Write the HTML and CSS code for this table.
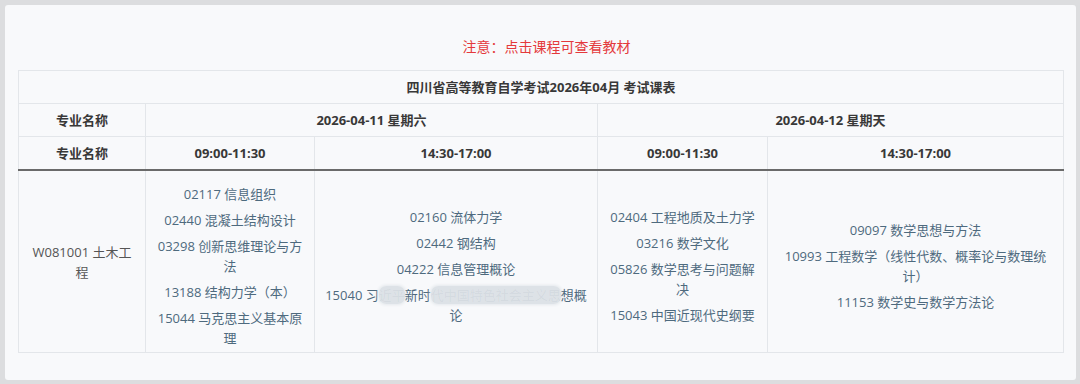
FILE: index.html
```html
<!DOCTYPE html>
<html lang="zh-CN">
<head>
<meta charset="utf-8">
<title>考试课表</title>
<link rel="stylesheet" href="styles.css">
</head>
<body>
<div class="card">
  <p class="notice">注意：点击课程可查看教材</p>
  <table class="schedule">
    <colgroup>
      <col class="c1"><col class="c2"><col class="c3"><col class="c4"><col class="c5">
    </colgroup>
    <thead>
      <tr><th colspan="5">四川省高等教育自学考试2026年04月 考试课表</th></tr>
      <tr><th>专业名称</th><th colspan="2">2026-04-11 星期六</th><th colspan="2">2026-04-12 星期天</th></tr>
      <tr class="last"><th>专业名称</th><th>09:00-11:30</th><th>14:30-17:00</th><th>09:00-11:30</th><th>14:30-17:00</th></tr>
    </thead>
    <tbody>
      <tr>
        <td class="major">W081001 土木工程</td>
        <td><div class="list">
          <a>02117 信息组织</a>
          <a>02440 混凝土结构设计</a>
          <a>03298 创新思维理论与方法</a>
          <a>13188 结构力学（本）</a>
          <a>15044 马克思主义基本原理</a>
        </div></td>
        <td><div class="list">
          <a>02160 流体力学</a>
          <a>02442 钢结构</a>
          <a>04222 信息管理概论</a>
          <a>15040 习<span class="blur">近平</span>新时<span class="blur">代中国特色社会主义思</span>想概论</a>
        </div></td>
        <td><div class="list">
          <a>02404 工程地质及土力学</a>
          <a>03216 数学文化</a>
          <a>05826 数学思考与问题解决</a>
          <a>15043 中国近现代史纲要</a>
        </div></td>
        <td><div class="list">
          <a>09097 数学思想与方法</a>
          <a>10993 工程数学（线性代数、概率论与数理统计）</a>
          <a>11153 数学史与数学方法论</a>
        </div></td>
      </tr>
    </tbody>
  </table>
</div>
</body>
</html>
```

FILE: styles.css
```css
html, body {
  margin: 0;
  padding: 0;
  background: #dcdddf;
}
body {
  padding: 5px;
  font-family: "Open Sans", "Noto Sans CJK SC", sans-serif;
  font-size: 13px;
}
.card {
  width: 1071px;
  height: 375px;
  box-sizing: border-box;
  background: #f8f9fb;
  border-radius: 3px;
  padding: 32px 13px 0 13px;
}
.notice {
  margin: 0 0 13px 0;
  padding-left: 12px;
  text-align: center;
  color: #e4393c;
  font-size: 14px;
  line-height: 20px;
}
.schedule {
  width: 1045px;
  table-layout: fixed;
  border-collapse: collapse;
  border: 1px solid #e3e6ea;
}
.c1 { width: 127px; }
.c2 { width: 169px; }
.c3 { width: 283px; }
.c4 { width: 170px; }
.c5 { width: 296px; }
.schedule th {
  border: 1px solid #e3e6ea;
  padding: 7px 8px;
  line-height: 18px;
  font-weight: bold;
  color: #383838;
  text-align: center;
}
.schedule tr.last th {
  border-bottom: 2px solid #6a6a6a;
}
.schedule td {
  border: 1px solid #e3e6ea;
  border-top: 0;
  padding: 13px 8px 4px 8px;
  text-align: center;
  vertical-align: middle;
  line-height: 20px;
}
.schedule td.major {
  color: #555;
  padding: 8px 12px 8px 12px;
}
.list {
  display: flex;
  flex-direction: column;
  gap: 6px;
}
.list a {
  color: #4e6a7e;
  text-decoration: none;
}
.blur {
  color: rgba(78, 106, 126, 0.08);
  background: #dde2e7;
  border-radius: 7px;
  box-shadow: 0 0 3px 1px #e4e8ec;
}
```
